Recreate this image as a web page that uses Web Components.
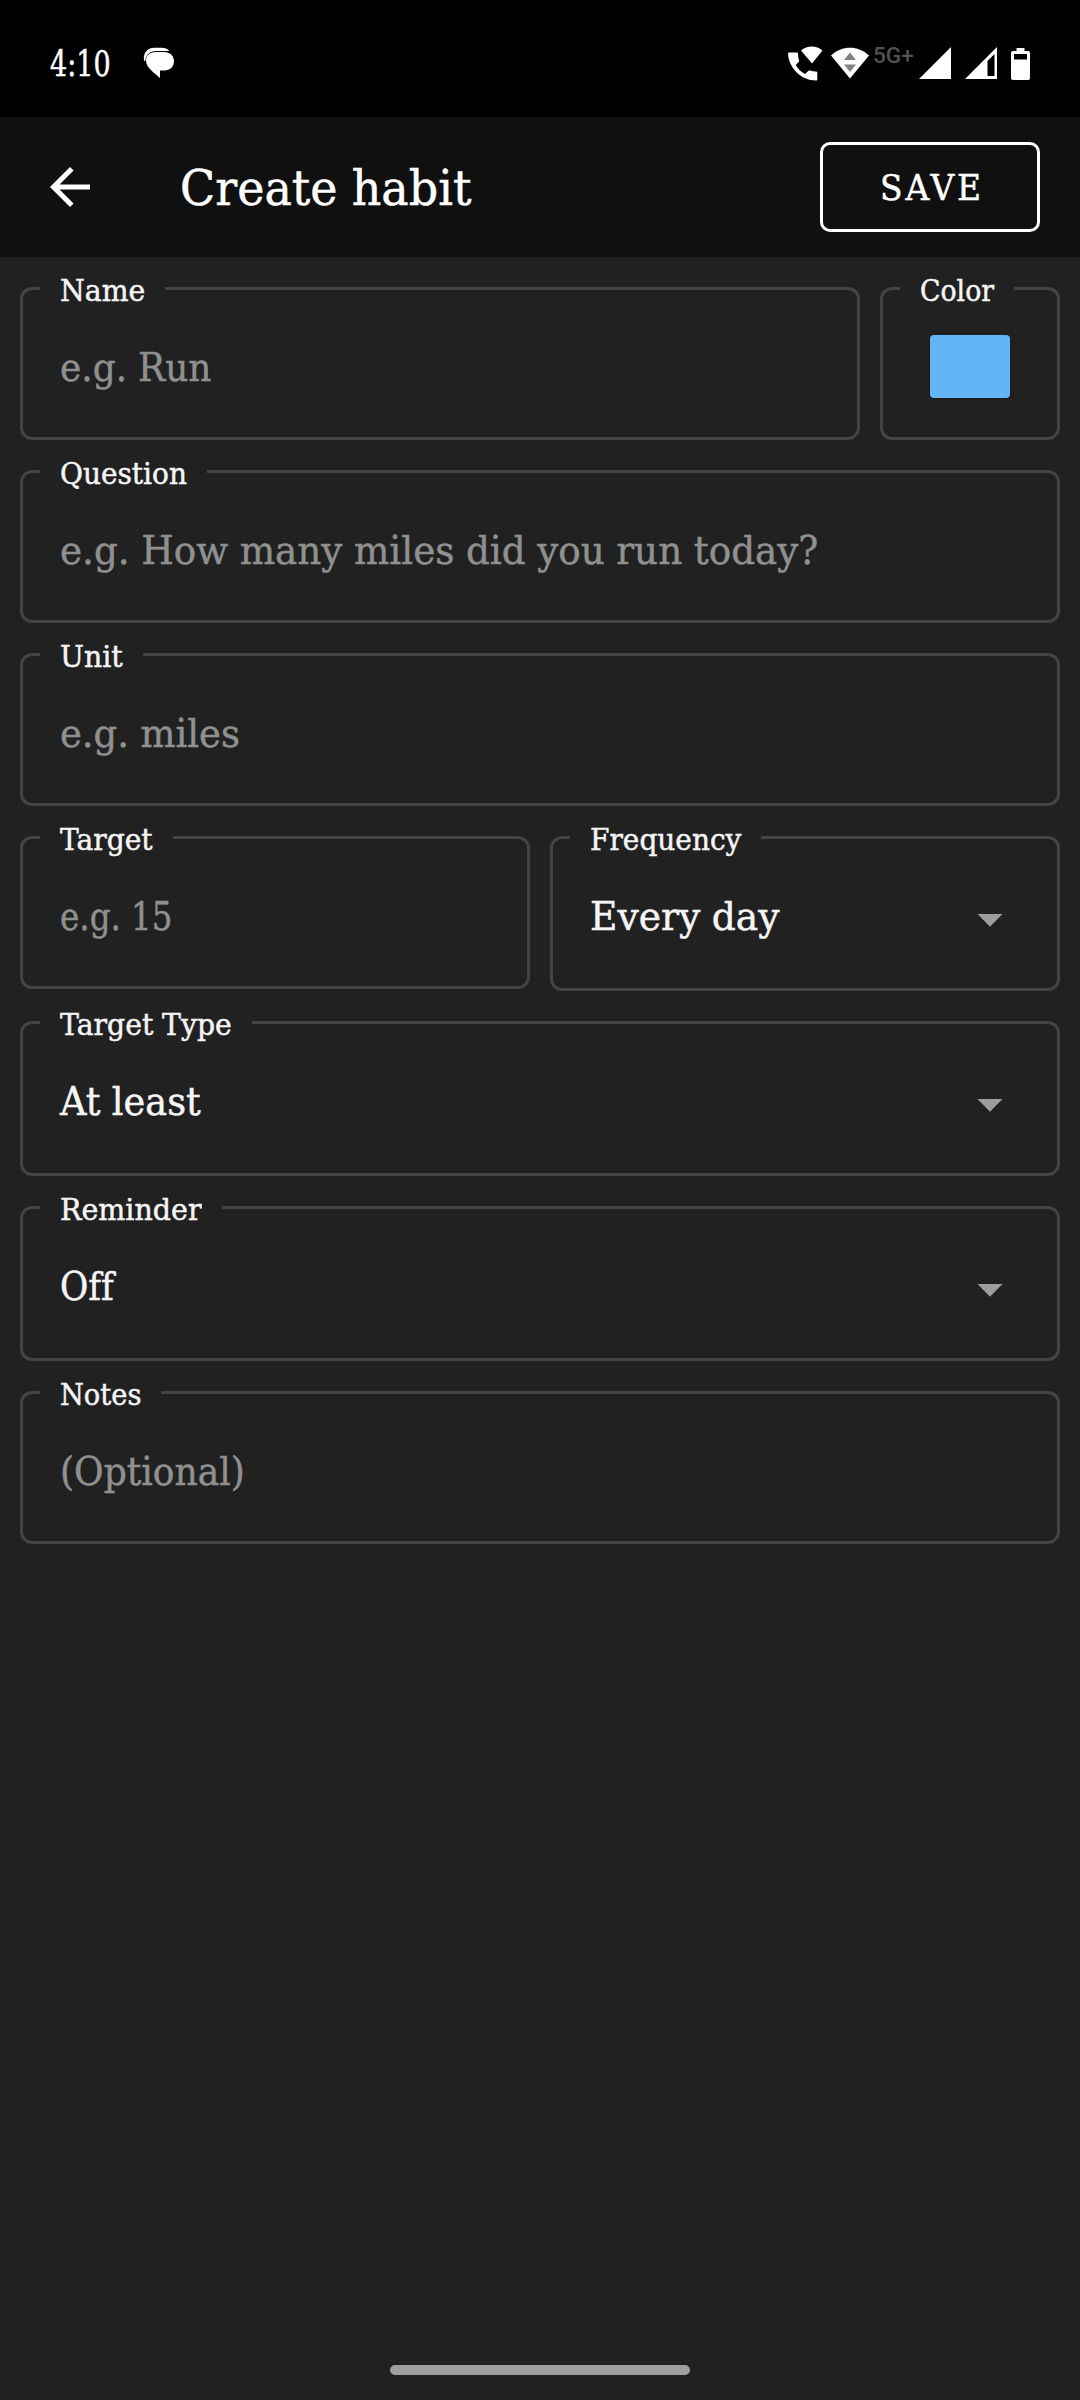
<!DOCTYPE html>
<html lang="en">
<head>
<meta charset="utf-8">
<title>Create habit</title>
<style>
html,body{margin:0;padding:0;background:#212121}
body{width:1080px;height:2400px;overflow:hidden;font-family:"Roboto Slab","DejaVu Serif",serif;color:#f5f5f5;font-variant-ligatures:none}
</style>
</head>
<body>
<habit-screen></habit-screen>
<script>
const define = (name, html, init) => customElements.define(name, class extends HTMLElement {
  connectedCallback() {
    if (this.shadowRoot) return;
    const root = this.attachShadow({ mode: 'open' });
    const t = document.createElement('template');
    t.innerHTML = html;
    root.append(t.content.cloneNode(true));
    if (init) init(this, root);
  }
});

/* One line of text set to a given advance width. */
define('fit-text', `
<style>
:host{display:block;white-space:nowrap;flex:none;word-spacing:-.01em;-webkit-text-stroke:.5px currentColor}
span{display:inline-block;transform-origin:0 50%}
</style><span><slot></slot></span>`, (host, root) => {
  const w = parseFloat(host.getAttribute('w'));
  const s = root.querySelector('span');
  host.style.width = w + 'px';
  const fit = () => {
    const n = s.offsetWidth;
    if (n) s.style.transform = `scaleX(${w / n})`;
  };
  fit();
  requestAnimationFrame(fit);
});

define('status-bar', `
<style>
:host{display:flex;box-sizing:border-box;height:117px;padding:4px 49px 0 50px;background:#000;color:#fff;align-items:center}
fit-text{font-size:35px;line-height:50px;padding-top:6px}
svg{display:block;flex:none}
.chat{margin:4px auto 0 32px}
.net{font:500 22px/26px Roboto,sans-serif;color:#525252;margin:-14px 5px 0 4px;padding:0;-webkit-text-stroke:0}
.icons{display:flex;align-items:center;height:40px;margin-top:5px}
</style>
<fit-text w="61">4:10</fit-text>
<svg class="chat" width="32" height="32" viewBox="0 0 32 32"><path d="M1.200 14C-.5 7 4 .8 11 .8h7.500c3.500 0 6.200 1 7.600 3.200H13C7 4 2.800 8 2.300 14z" fill="#fff"/><path d="M12.500 5h9c5.500 0 9.500 4 9.500 9.200 0 5.300-4 9.300-9.500 9.300H17V31C11 25.500 3 20.500 3 13.500 3 8.500 7 5 12.500 5z" fill="#fff"/></svg>
<div class="icons">
<svg width="36" height="38" viewBox="0 0 36 38"><path d="M1.500 9h7c1 0 1.500.5 1.500 1.500 0 2.300.4 4.400 1 6.300.2.700.1 1.300-.4 1.800l-2.900 3c2.400 4.200 5.200 6.700 9.400 9l3.200-3.200c.5-.5 1.200-.6 1.800-.4 1.700.6 3.700 1 5.700 1 1 0 1.500.5 1.500 1.500v6c0 1-.5 1.500-1.500 1.500C13 37 1 24.500 0 10.500 0 9.600.5 9 1.500 9z" transform="translate(0 -.5)" fill="#fff"/><path d="M13 6.500C19 1.200 28.500 1.200 34.500 6.500L24 19.500z" fill="#fff"/></svg>
<svg style="margin-left:7px" width="38" height="34" viewBox="0 0 38 34"><path d="M0 9.500C11-.8 27-.8 38 9.500L19 32.500z" fill="#fff"/><path d="M19 6.500l6 7.500H13zM13 18.500h12L19 26z" fill="#828282"/></svg>
<fit-text class="net" w="41">5G+</fit-text>
<svg width="32" height="32" viewBox="0 0 32 32"><path d="M32 0v32H0z" fill="#fff"/></svg>
<svg style="margin-left:14px" width="32" height="32" viewBox="0 0 32 32"><path fill-rule="evenodd" d="M32 0v32H0zM29.500 7l-7 7v15h7z" fill="#fff"/></svg>
<svg style="margin:1px 0 0 14px" width="20" height="32" viewBox="0 0 20 32"><path fill-rule="evenodd" d="M5.500 0h8v3H17c1.400 0 2 .7 2 2v25c0 1.300-.6 2-2 2H2c-1.300 0-2-.7-2-2V5c0-1.300.7-2 2-2h3.500zM3 6v5.500h13V6z" fill="#fff"/></svg>
</div>`);

define('app-bar', `
<style>
:host{display:flex;align-items:center;box-sizing:border-box;height:140px;padding:0 40px;background:#101010;color:#fff}
.title{font-size:49px;line-height:70px;margin:3px auto 0 80px}
button{all:unset;box-sizing:border-box;width:220px;height:90px;border:3px solid #fff;border-radius:10px;display:flex;justify-content:center;align-items:center}
button fit-text{font-size:34.500px;line-height:50px;letter-spacing:3px;padding:2px 0 0 3px}
</style>
<svg width="60" height="60" viewBox="0 0 24 24"><path d="M20 11H7.830l5.590-5.590L12 4l-8 8 8 8 1.410-1.410L7.830 13H20v-2z" fill="#fff"/></svg>
<fit-text class="title" w="291">Create habit</fit-text>
<button><fit-text w="104">SAVE</fit-text></button>`);

/* Outlined box whose label interrupts the top border. */
define('form-field', `
<style>
:host{display:flex;position:relative;box-sizing:border-box;height:153px;border:3px solid #444;border-radius:12px;padding:48px 37px 0;flex:1 1 0;color:#909090;font-size:39px;line-height:60px;justify-content:space-between}
:host([select]){height:155px;color:#f5f5f5}
:host([swatch]){flex:0 0 180px;padding:45px 47px 0}
.label{position:absolute;left:17px;top:-14px;padding:0 20px;background:#212121;color:#f5f5f5;font-size:29.300px;line-height:30px}
svg{display:none;margin:27px 17px 0 0}
:host([select]) svg{display:block}
</style>
<div class="label"></div><slot></slot>
<svg width="26" height="13" viewBox="0 0 26 13"><path d="M.5 0h25L13 12.800z" fill="#9e9e9e"/></svg>`, (host, root) => {
  const f = document.createElement('fit-text');
  f.setAttribute('w', host.getAttribute('lw'));
  f.textContent = host.getAttribute('label');
  root.querySelector('.label').append(f);
});

define('color-swatch', `<style>:host{display:block;width:80px;height:63px;border-radius:4px;background:#64b5f6;box-shadow:0 1px 4px #0003}</style>`);

define('habit-screen', `
<style>
:host{display:flex;flex-direction:column;height:2400px;background:#212121}
main{display:flex;flex-direction:column;gap:30px;padding:30px 20px;flex:1;box-sizing:border-box}
.row{display:flex;gap:20px;align-items:flex-start}
footer{display:flex;justify-content:center;padding-bottom:25px}
footer i{width:300px;height:10px;border-radius:5px;background:#9e9e9e}
</style>
<status-bar></status-bar>
<app-bar></app-bar>
<main>
<div class="row"><form-field label="Name" lw="85"><fit-text w="151">e.g. Run</fit-text></form-field><form-field swatch label="Color" lw="74"><color-swatch></color-swatch></form-field></div>
<div class="row"><form-field label="Question" lw="127"><fit-text w="758">e.g. How many miles did you run today?</fit-text></form-field></div>
<div class="row"><form-field label="Unit" lw="63"><fit-text w="180">e.g. miles</fit-text></form-field></div>
<div class="row"><form-field label="Target" lw="93"><fit-text w="112">e.g. 15</fit-text></form-field><form-field select label="Frequency" lw="151"><fit-text w="190">Every day</fit-text></form-field></div>
<div class="row"><form-field select label="Target Type" lw="172"><fit-text w="141">At least</fit-text></form-field></div>
<div class="row"><form-field select label="Reminder" lw="142"><fit-text w="54">Off</fit-text></form-field></div>
<div class="row"><form-field label="Notes" lw="81"><fit-text w="185">(Optional)</fit-text></form-field></div>
</main>
<footer><i></i></footer>`);
</script>
</body>
</html>
